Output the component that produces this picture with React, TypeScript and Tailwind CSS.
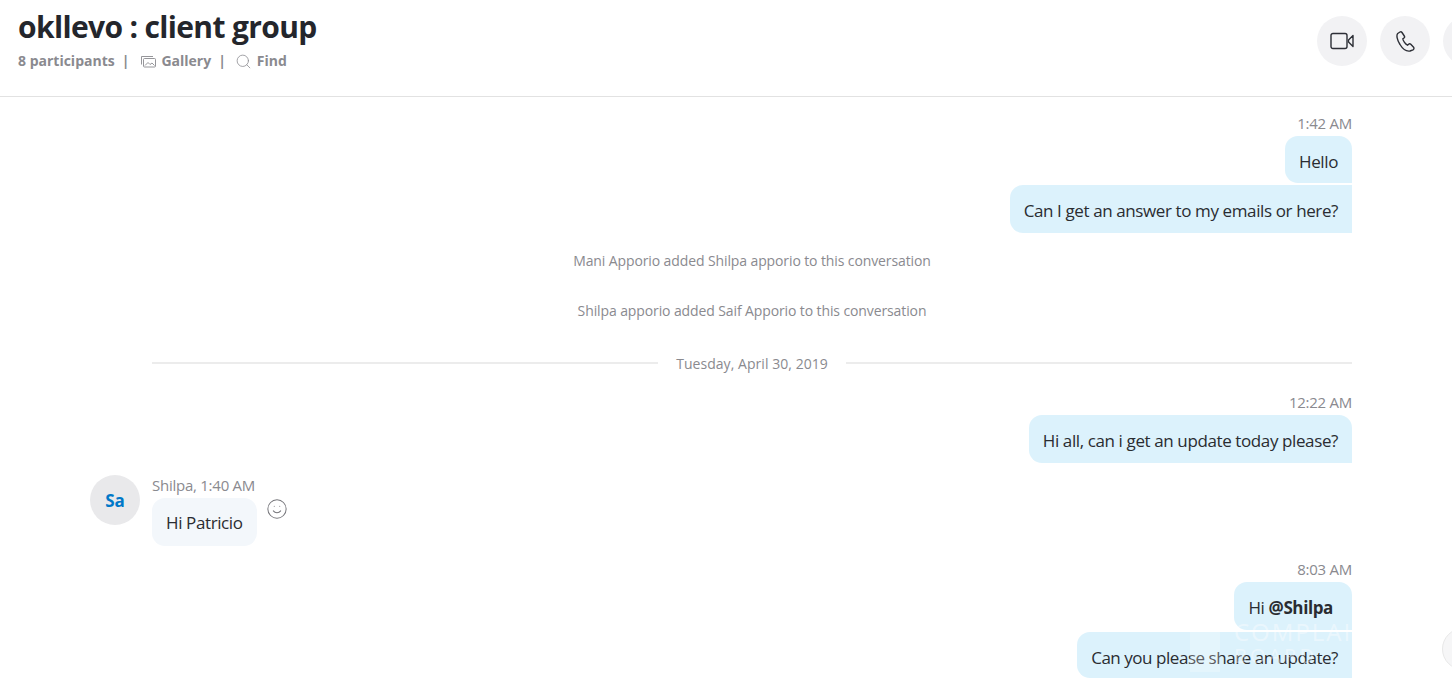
// App.tsx - group chat conversation view.
import { Search, Smile } from "lucide-react";

const font = "font-['Open_Sans','Noto_Sans',sans-serif]";

function Outgoing({ children, first, className }: { children: React.ReactNode; first?: boolean; className?: string }) {
  return (
    <div
      className={`flex items-center self-end rounded-l-[13px] bg-[#dcf2fc] pt-[4px] pr-[14px] pl-[14px] text-[17px] tracking-[-0.39px] text-[#2a2c31] ${
        first ? "rounded-tr-[13px]" : ""
      } ${className ?? ""}`}
    >
      {children}
    </div>
  );
}

function Stamp({ children, className }: { children: React.ReactNode; className?: string }) {
  return <div className={`self-end text-[15px] leading-[20px] tracking-[-0.25px] text-[#8a8a8f] ${className ?? ""}`}>{children}</div>;
}

function Notice({ children, className }: { children: React.ReactNode; className?: string }) {
  return <div className={`self-center text-center text-[14px] leading-[20px] tracking-[-0.11px] text-[#8a8a8f] ${className ?? ""}`}>{children}</div>;
}

function RoundButton({ children }: { children?: React.ReactNode }) {
  return <div className="flex size-[50px] shrink-0 items-center justify-center rounded-full bg-[#f2f2f4] text-[#2d2f36]">{children}</div>;
}

export default function App() {
  return (
    <div className={`relative h-[686px] w-[1452px] overflow-hidden bg-white ${font}`}>
      <header className="flex h-[97px] items-start justify-between border-b border-[#e2e2e2] pl-[18px]">
        <div>
          <h1 className="mt-[7px] text-[30px] leading-[40px] font-bold tracking-[-0.65px] text-[#24262c]">okllevo : client group</h1>
          <div className="mt-[4px] flex items-center text-[14px] leading-[20px] font-bold text-[#8a8a8f]">
            <span>8 participants</span>
            <span className="ml-[7px]">|</span>
            <svg className="ml-[12px]" width="15" height="13" viewBox="0 0 15 13" fill="none" stroke="#8a8a8f" strokeWidth="0.9">
              <rect x="2.5" y="3.5" width="12" height="8.5" rx="1" />
              <path d="M0.5 9.5V1.5h11.5M4 10.5l3-3 2 2 2-1.5 2.5 2.5" />
            </svg>
            <span className="ml-[5px]">Gallery</span>
            <span className="ml-[7px]">|</span>
            <Search className="ml-[9px]" size={17} strokeWidth={1.1} />
            <span className="ml-[5px]">Find</span>
          </div>
        </div>
        <div className="mt-[16px] -mr-[41px] flex gap-[13px]">
          <RoundButton>
            <svg width="24" height="18" viewBox="0 0 24 18" fill="none" stroke="currentColor" strokeWidth="1.4" strokeLinejoin="round">
              <rect x="1" y="1.5" width="16" height="15" rx="2" />
              <path d="M23 3.5L18.5 8v2l4.5 4.5z" />
            </svg>
          </RoundButton>
          <RoundButton>
            <svg width="19" height="21" viewBox="0 0 19 21" fill="none" stroke="currentColor" strokeWidth="1.4" strokeLinejoin="round">
              <path d="M4 1L1.7 2.5C0.2 4 1 9 4 13.5C7 18.5 11 20.5 14 20L17 18.8C18 18.2 18.2 17 17.6 16.3L14.8 13.3C14.2 12.7 13.2 12.7 12.6 13.2L11.5 14.2C9.5 13.3 7 9.8 6.8 7.8L8 7C8.6 6.5 8.7 5.6 8.3 5L6 1.5C5.5 0.8 4.7 0.6 4 1Z" />
            </svg>
          </RoundButton>
          <RoundButton />
        </div>
      </header>

      <main className="flex flex-col pr-[100px] pl-[152px]">
        <Stamp className="mt-[16px]">1:42 AM</Stamp>
        <Outgoing first className="mt-[3px] h-[47px]">Hello</Outgoing>
        <Outgoing className="mt-[2px] h-[48px]">Can I get an answer to my emails or here?</Outgoing>
        <Notice className="mt-[18px]">Mani Apporio added Shilpa apporio to this conversation</Notice>
        <Notice className="mt-[30px]">Shilpa apporio added Saif Apporio to this conversation</Notice>

        <div className="mt-[31px] flex items-center">
          <div className="h-[2px] flex-1 bg-[#ececec]" />
          <span className="mx-[18px] mt-[2px] text-[14px] leading-[20px] tracking-[0.05px] text-[#8a8a8f]">Tuesday, April 30, 2019</span>
          <div className="h-[2px] flex-1 bg-[#ececec]" />
        </div>

        <Stamp className="mt-[18px]">12:22 AM</Stamp>
        <Outgoing first className="mt-[3px] h-[48px] tracking-[-0.34px]">Hi all, can i get an update today please?</Outgoing>

        <div className="relative mt-[1px]">
          <div className="absolute top-[11px] -left-[62px] flex size-[50px] items-center justify-center rounded-full bg-[#e9e9eb] pt-[2px] text-[17px] font-bold text-[#0078c8]">Sa</div>
          <div className="pt-[11px] text-[15px] leading-[20px] tracking-[-0.25px] text-[#8a8a8f]">Shilpa, 1:40 AM</div>
          <div className="flex items-start">
            <div className="mt-[3px] flex h-[48px] items-center rounded-[13px] bg-[#f3f7fb] px-[14px] pt-[2px] text-[17px] tracking-[-0.39px] text-[#2a2c31]">Hi Patricio</div>
            <Smile className="mt-[3px] ml-[9px] text-[#77777c]" size={22} strokeWidth={1.1} />
          </div>
        </div>

        <Stamp className="mt-[13px]">8:03 AM</Stamp>
        <Outgoing first className="mt-[3px] h-[48px] pr-[19px]">
          <span>
            Hi <b className="font-bold">@Shilpa</b>
          </span>
        </Outgoing>
        <Outgoing className="mt-[2px] h-[46px] pt-[6px] tracking-[-0.46px]">Can you please share an update?</Outgoing>
      </main>

      {/* watermark over the last bubbles, cut where the bubble column ends */}
      <div className="absolute top-[620px] left-[1190px] flex w-[162px] gap-[14px] overflow-hidden opacity-60">
        <div className="mt-[10px] h-[42px] w-[30px] shrink-0 bg-white/40" />
        <div className="text-[24px] leading-[24px] tracking-[2px] whitespace-nowrap text-white/70">
          COMPLAINTS
          <div className="text-[20px] leading-[24px] tracking-[3px]">BOARD</div>
        </div>
      </div>

      {/* scroll-down button, cut by the window edge */}
      <div className="absolute top-[628px] left-[1442px] size-[42px] rounded-full border border-[#e8e8e8] bg-[#f6f6f7]" />
    </div>
  );
}
